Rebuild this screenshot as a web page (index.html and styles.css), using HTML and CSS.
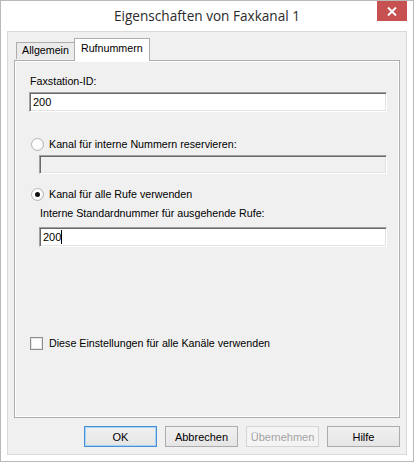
FILE: index.html
```html
<!DOCTYPE html>
<html lang="de">
<head>
    <meta charset="UTF-8">
    <title>Eigenschaften von Faxkanal 1</title>
    <link rel="stylesheet" href="styles.css">
</head>
<body>

<div class="window">
    <!-- Title bar -->
    <div class="titlebar">
        <div class="title">Eigenschaften von Faxkanal 1</div>
        <div class="close-btn">
            <svg width="10" height="9" viewBox="0 0 10 9"><path d="M1 0.5 L9 8.5 M9 0.5 L1 8.5" stroke="#fff" stroke-width="2"/></svg>
        </div>
    </div>

    <div class="client">
        <!-- Tabs -->
        <div class="tabs">
            <div class="tab">Allgemein</div>
            <div class="tab active">Rufnummern</div>
        </div>

        <div class="panel">
            <div class="label first">Faxstation-ID:</div>
            <div class="field">200</div>

            <div class="option opt-1">
                <span class="radio"></span>
                <span>Kanal für interne Nummern reservieren:</span>
            </div>
            <div class="field indent disabled"></div>

            <div class="option opt-2">
                <span class="radio checked"></span>
                <span>Kanal für alle Rufe verwenden</span>
            </div>
            <div class="label indent-label">Interne Standardnummer für ausgehende Rufe:</div>
            <div class="field indent field-3">200<span class="caret"></span></div>

            <div class="option opt-check">
                <span class="checkbox"></span>
                <span>Diese Einstellungen für alle Kanäle verwenden</span>
            </div>
        </div>

        <!-- Buttons -->
        <div class="buttons">
            <div class="btn default">OK</div>
            <div class="btn">Abbrechen</div>
            <div class="btn disabled">Übernehmen</div>
            <div class="btn">Hilfe</div>
        </div>
    </div>
</div>

</body>
</html>
```

FILE: styles.css
```css
* { margin: 0; padding: 0; box-sizing: border-box; }
body { background: #fff; font-family: "Liberation Sans", Arial, sans-serif; font-size: 10.7px; color: #000; }

.window { width: 414px; height: 462px; border: 1px solid #b9b9b9; background: #fff; display: flex; flex-direction: column; }

.titlebar { height: 30px; display: flex; align-items: flex-start; padding-left: 36px; }
.title { flex: 1; text-align: center; font-family: "Open Sans", "Noto Sans", sans-serif; font-size: 13.6px; color: #2b2b2b; padding-top: 5px; }
.close-btn { width: 30px; height: 20px; margin-right: 6px; background: #c75050; display: flex; align-items: center; justify-content: center; }

.client { flex: 1; margin: 0 6px 6px 6px; border: 1px solid #d9d9d9; background: #f0f0f0; display: flex; flex-direction: column; padding: 6px 6px 0 6px; }

.tabs { display: flex; align-items: flex-end; height: 22px; padding-left: 2px; position: relative; z-index: 1; }
.tab { height: 17px; line-height: 15px; padding: 0 5px; border: 1px solid #acacac; border-bottom: none; background: #ebebeb; margin-bottom: 1px; }
.tab.active { height: 23px; line-height: 19px; padding: 0 6px; background: #fff; margin-bottom: -1px; margin-left: -1px; }

.panel { height: 358px; border: 1px solid #acacac; background: #f0f0f0; box-shadow: inset 0 0 0 1px #fff; padding: 0 12px 0 14px; display: flex; flex-direction: column; }

.label { height: 14px; line-height: 14px; padding-left: 1px; }
.label.first { margin-top: 13px; }
.indent-label { margin-top: 5px; padding-left: 11px; }

.field { height: 20px; margin-top: 4px; background: #fff; border-top: 1px solid #a0a0a0; border-left: 1px solid #a0a0a0; border-right: 1px solid #fff; border-bottom: 1px solid #fff; box-shadow: inset 1px 1px 0 #696969, -1px -1px 0 #e3e3e3 inset; padding: 3px 0 0 3px; line-height: 13px; font-size: 11px; }
.field.indent { margin-left: 10px; }
.field.disabled { background: #f0f0f0; height: 19px; }
.field-3 { margin-top: 7px; display: flex; align-items: flex-start; }
.caret { display: inline-block; width: 1px; height: 14px; background: #000; margin-top: -1px; }

.option { height: 14px; display: flex; align-items: center; gap: 5px; padding-left: 2px; }
.opt-1 { margin-top: 25px; }
.opt-2 { margin-top: 13px; }
.opt-check { margin-top: 89px; padding-left: 1px; gap: 6px; }

.radio { width: 13px; height: 13px; border-radius: 50%; border: 1px solid #b5b5b5; background: radial-gradient(circle at 40% 40%, #fff 40%, #eaeaea 100%); display: flex; align-items: center; justify-content: center; }
.radio.checked::after { content: ""; width: 5px; height: 5px; border-radius: 50%; background: #111; }
.checkbox { width: 13px; height: 13px; border: 1px solid #8e8f8f; background: #fff; box-shadow: inset 0 0 0 1px #e6e6e6; }

.buttons { display: flex; justify-content: flex-end; gap: 8px; margin-top: 8px; }
.btn { width: 73px; height: 21px; border: 1px solid #acacac; background: linear-gradient(#f0f0f0, #e5e5e5); display: flex; align-items: center; justify-content: center; font-size: 11px; }
.btn.default { border-color: #4a90d9; box-shadow: inset 0 0 0 1px #a9d4f5; }
.btn.disabled { border-color: #d5d5d5; background: #f4f4f4; color: #a3a3a3; }
```
